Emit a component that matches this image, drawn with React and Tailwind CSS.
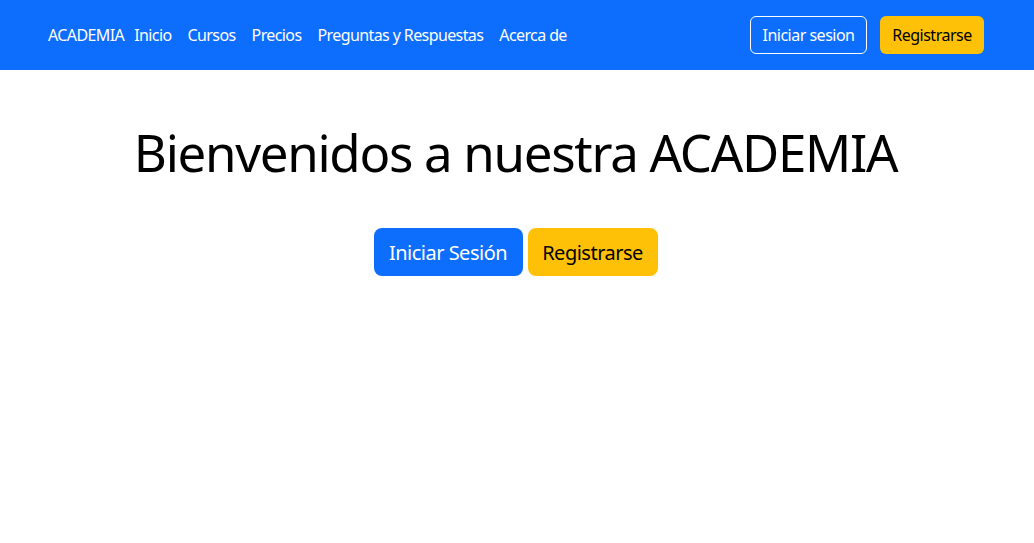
import React from "react";

const links = ["Inicio", "Cursos", "Precios", "Preguntas y Respuestas", "Acerca de"];

const App = () => {
  return (
    <div className="min-h-[543px] bg-white font-['Noto_Sans',sans-serif] text-black">
      <nav className="flex h-[70px] items-center justify-between bg-[#0d6efd] pl-[48px] pr-[50px]">
        <div className="flex items-center text-[16px] tracking-[-0.6px] text-white">
          <span className="mr-[10px]">ACADEMIA</span>
          <ul className="flex gap-[16px]">
            {links.map((l) => (
              <li key={l}>{l}</li>
            ))}
          </ul>
        </div>
        <div className="flex gap-[13px] text-[16px] tracking-[-0.5px]">
          <button className="h-[38px] w-[117px] rounded-[6px] border border-white text-white">
            Iniciar sesion
          </button>
          <button className="h-[38px] w-[104px] rounded-[6px] bg-[#ffc107] text-black">
            Registrarse
          </button>
        </div>
      </nav>
      <main className="flex flex-col items-center pt-[51px] pr-[3px]">
        <h1 className="text-[51px] leading-[62px] font-normal tracking-[-1.3px]">
          Bienvenidos a nuestra ACADEMIA
        </h1>
        <div className="mt-[45px] flex gap-[5px] text-[20px] tracking-[-0.5px]">
          <button className="h-[48px] w-[149px] rounded-[8px] bg-[#0d6efd] pt-[2px] text-white">
            Iniciar Sesión
          </button>
          <button className="h-[48px] w-[130px] rounded-[8px] bg-[#ffc107] pt-[2px] text-black">
            Registrarse
          </button>
        </div>
      </main>
    </div>
  );
};

export default App;
